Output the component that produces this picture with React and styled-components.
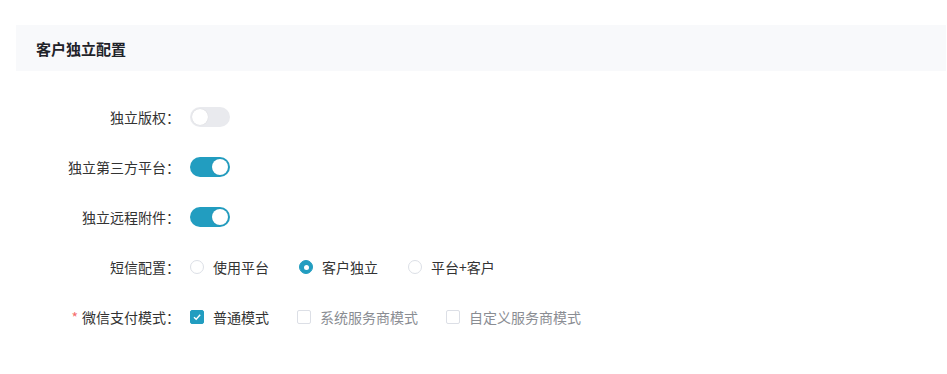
import React, { useState } from "react";
import styled, { createGlobalStyle } from "styled-components";

const BLUE = "#229dc0";

const GlobalStyle = createGlobalStyle`
	body {
		margin: 0;
		background: #fff;
		font-family: "Noto Sans CJK SC", "Noto Sans", sans-serif;
	}
`;

const Page = styled.div`
	padding: 25px 1px 0 16px;
`;

const Header = styled.div`
	height: 46px;
	display: flex;
	align-items: center;
	padding-left: 20px;
	background: #f8f9fb;
	font-size: 15px;
	font-weight: bold;
	color: #1f2329;
`;

const Form = styled.div`
	margin-top: 26px;
	display: flex;
	flex-direction: column;
	gap: 10px;
`;

const Row = styled.div`
	height: 40px;
	display: flex;
	align-items: center;
`;

const Label = styled.div`
	width: 174px;
	box-sizing: border-box;
	padding-right: 10px;
	text-align: right;
	font-size: 14px;
	color: #333;
`;

const Star = styled.span`
	color: #f56c6c;
	margin-right: 4px;
`;

const Control = styled.div`
	display: flex;
	align-items: center;
	gap: ${p => p.$gap}px;
`;

const Switch = styled.button`
	width: 40px;
	height: 20px;
	border: none;
	padding: 0;
	border-radius: 10px;
	background: ${p => (p.$on ? BLUE : "#e9eaee")};
	position: relative;
	cursor: pointer;
	&::after {
		content: "";
		position: absolute;
		top: 2px;
		left: ${p => (p.$on ? "22px" : "2px")};
		width: 16px;
		height: 16px;
		border-radius: 50%;
		background: #fff;
		box-shadow: 0 0 1px rgba(0, 0, 0, 0.15);
	}
`;

const Option = styled.label`
	display: flex;
	align-items: center;
	gap: 9px;
	font-size: 14px;
	color: ${p => (p.$muted ? "#8a8d93" : "#333")};
	cursor: pointer;
`;

const RadioDot = styled.span`
	width: 14px;
	height: 14px;
	box-sizing: border-box;
	border-radius: 50%;
	border: 1px solid ${p => (p.$on ? BLUE : "#dcdfe6")};
	background: ${p => (p.$on ? BLUE : "#fff")};
	display: flex;
	align-items: center;
	justify-content: center;
	&::after {
		content: "";
		width: 5px;
		height: 5px;
		border-radius: 50%;
		background: #fff;
		display: ${p => (p.$on ? "block" : "none")};
	}
`;

const Box = styled.span`
	width: 14px;
	height: 14px;
	box-sizing: border-box;
	border-radius: 2px;
	border: 1px solid ${p => (p.$on ? BLUE : "#dcdfe6")};
	background: ${p => (p.$on ? BLUE : "#fff")};
	display: flex;
	align-items: center;
	justify-content: center;
`;

const Check = () => (
	<svg width="10" height="10" viewBox="0 0 10 10">
		<path d="M2 5.2 L4.2 7.3 L8.2 2.8" fill="none" stroke="#fff" strokeWidth="1.4" />
	</svg>
);

const smsOptions = ["使用平台", "客户独立", "平台+客户"];
const payOptions = ["普通模式", "系统服务商模式", "自定义服务商模式"];

export default function App() {
	const [switches, setSwitches] = useState({ copyright: false, third: true, remote: true });
	const [sms, setSms] = useState("客户独立");
	const [pay, setPay] = useState(["普通模式"]);

	const flip = key => setSwitches(s => ({ ...s, [key]: !s[key] }));
	const togglePay = opt =>
		setPay(p => (p.includes(opt) ? p.filter(x => x !== opt) : [...p, opt]));

	return (
		<Page>
			<GlobalStyle />
			<Header>客户独立配置</Header>
			<Form>
				<Row>
					<Label>独立版权：</Label>
					<Switch $on={switches.copyright} onClick={() => flip("copyright")} />
				</Row>
				<Row>
					<Label>独立第三方平台：</Label>
					<Switch $on={switches.third} onClick={() => flip("third")} />
				</Row>
				<Row>
					<Label>独立远程附件：</Label>
					<Switch $on={switches.remote} onClick={() => flip("remote")} />
				</Row>
				<Row>
					<Label>短信配置：</Label>
					<Control $gap={30}>
						{smsOptions.map(opt => (
							<Option key={opt} onClick={() => setSms(opt)}>
								<RadioDot $on={sms === opt} />
								{opt}
							</Option>
						))}
					</Control>
				</Row>
				<Row>
					<Label>
						<Star>*</Star>微信支付模式：
					</Label>
					<Control $gap={28}>
						{payOptions.map(opt => (
							<Option key={opt} $muted={!pay.includes(opt)} onClick={() => togglePay(opt)}>
								<Box $on={pay.includes(opt)}>{pay.includes(opt) && <Check />}</Box>
								{opt}
							</Option>
						))}
					</Control>
				</Row>
			</Form>
		</Page>
	);
}
